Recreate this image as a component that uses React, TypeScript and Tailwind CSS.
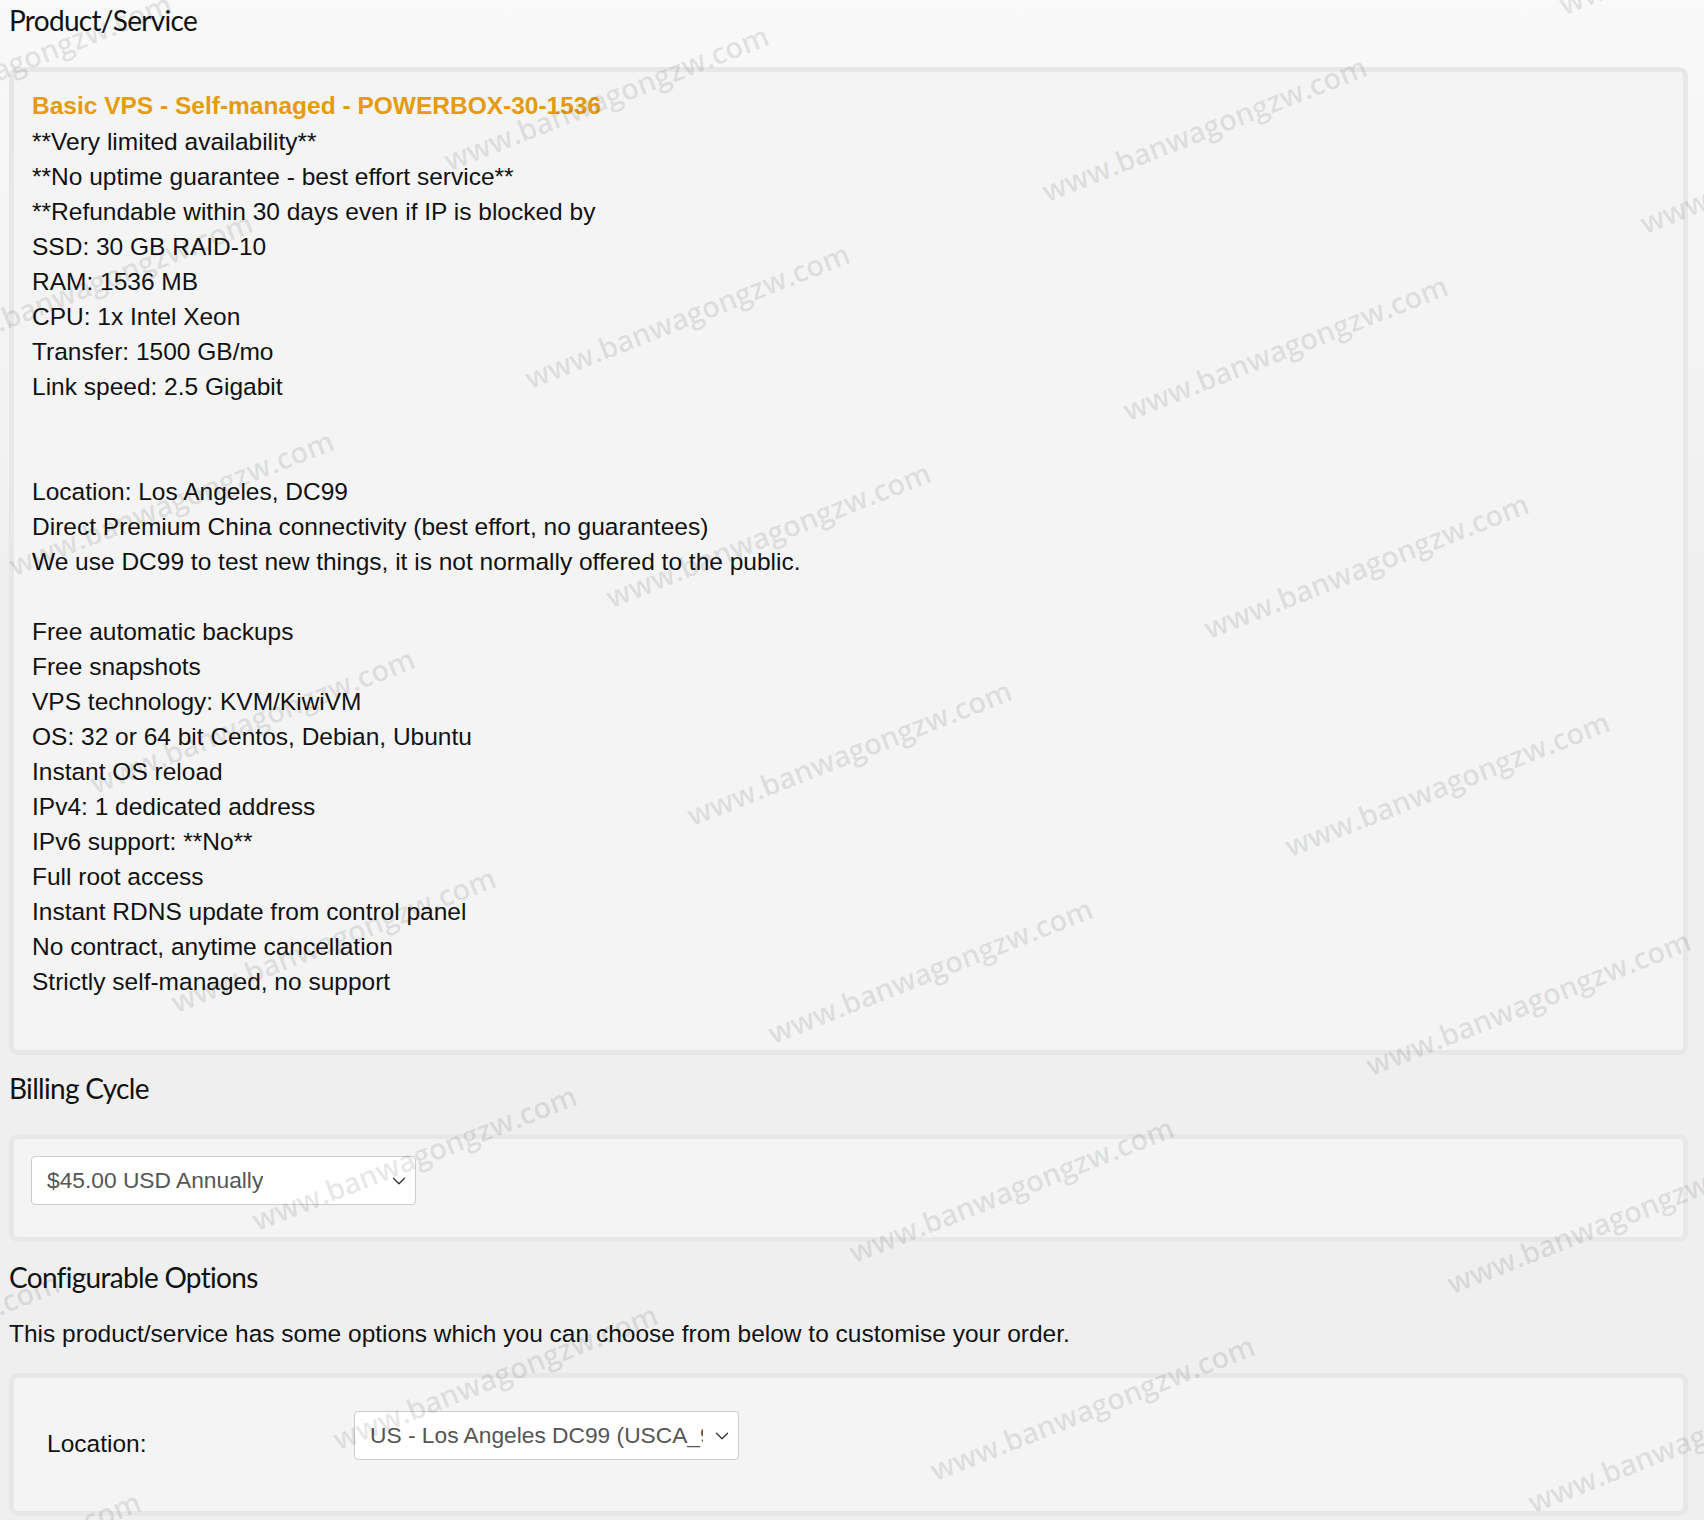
import { ChevronDown } from 'lucide-react'

const features = [
  '**Very limited availability**',
  '**No uptime guarantee - best effort service**',
  '**Refundable within 30 days even if IP is blocked by',
  'SSD: 30 GB RAID-10',
  'RAM: 1536 MB',
  'CPU: 1x Intel Xeon',
  'Transfer: 1500 GB/mo',
  'Link speed: 2.5 Gigabit',
  '',
  '',
  'Location: Los Angeles, DC99',
  'Direct Premium China connectivity (best effort, no guarantees)',
  'We use DC99 to test new things, it is not normally offered to the public.',
  '',
  'Free automatic backups',
  'Free snapshots',
  'VPS technology: KVM/KiwiVM',
  'OS: 32 or 64 bit Centos, Debian, Ubuntu',
  'Instant OS reload',
  'IPv4: 1 dedicated address',
  'IPv6 support: **No**',
  'Full root access',
  'Instant RDNS update from control panel',
  'No contract, anytime cancellation',
  'Strictly self-managed, no support',
]

// watermark grid, centres in page pixels
function watermarkSpots() {
  const spots: { x: number; y: number }[] = []
  for (let i = -3; i <= 4; i++) {
    for (let j = -3; j <= 6; j++) {
      const x = 170.6 + i * 597.7 + j * 81
      const y = 502 + i * 31.5 + j * 218.4
      if (x > -220 && x < 1920 && y > -80 && y < 1620) spots.push({ x, y })
    }
  }
  return spots
}

function Heading({ children, className = '' }: { children: string; className?: string }) {
  return (
    <h2 className={`font-['Lato',sans-serif] text-[28px] leading-[36px] font-normal text-[#111] tracking-[-0.7px] ${className}`}>
      {children}
    </h2>
  )
}

function Panel({ children, className = '' }: { children: React.ReactNode; className?: string }) {
  return (
    <div className={`border-[5px] border-[#e7e7e7] rounded-[9px] bg-[#f4f4f4] ${className}`}>{children}</div>
  )
}

function FakeSelect({ value, textWidth = '' }: { value: string; textWidth?: string }) {
  return (
    <div className="w-[385px] h-[49px] bg-white border border-[#cccccc] rounded-[4px] flex items-center pl-[15px] pr-[5px] text-[22.75px] text-[#555]">
      <span className={`whitespace-nowrap overflow-hidden ${textWidth}`}>{value}</span>
      <span className="flex-1" />
      <ChevronDown size={22} strokeWidth={1.4} className="text-[#333]" />
    </div>
  )
}

export default function App() {
  return (
    <div className="relative min-h-screen overflow-hidden bg-[linear-gradient(#f9f9f9,#efefef_600px)] font-['Liberation_Sans',Arial,sans-serif] text-[24.5px] leading-[35px] text-[#111]">
      <div className="pl-[9px] pr-[16px] pb-[8px]">
        <Heading className="mt-[2px] mb-[29px]">Product/Service</Heading>

        <Panel className="pl-[18px] pr-[18px] pt-[15px] pb-[51px]">
          <div className="font-bold text-[#e49b0f] leading-[37px]">Basic VPS - Self-managed - POWERBOX-30-1536</div>
          {features.map((line, idx) => (
            <div key={idx} className="h-[35px] whitespace-nowrap">
              {line || '\u00a0'}
            </div>
          ))}
        </Panel>

        <Heading className="mt-[15px] mb-[28px]">Billing Cycle</Heading>

        <Panel className="pl-[17px] pt-[17px] pb-[32px]">
          <FakeSelect value="$45.00 USD Annually" />
        </Panel>

        <Heading className="mt-[17px]">Configurable Options</Heading>
        <p className="mt-[21px] mb-[22px]">
          This product/service has some options which you can choose from below to customise your order.
        </p>

        <Panel className="pl-[33px] pt-[33px] pb-[50px]">
          <div className="flex items-start">
            <label className="w-[307px] mt-[15px]">Location:</label>
            <FakeSelect value="US - Los Angeles DC99 (USCA_9)" textWidth="w-[333px]" />
          </div>
        </Panel>
      </div>

      <div className="pointer-events-none absolute inset-0 z-10 overflow-hidden">
        {watermarkSpots().map((s, idx) => (
          <span
            key={idx}
            className="absolute whitespace-nowrap -translate-x-1/2 -translate-y-1/2 -rotate-[21.6deg] font-['Open_Sans',sans-serif] font-semibold text-[29px] leading-none text-black/10"
            style={{ left: s.x, top: s.y }}
          >
            www.banwagongzw.com
          </span>
        ))}
      </div>
    </div>
  )
}
